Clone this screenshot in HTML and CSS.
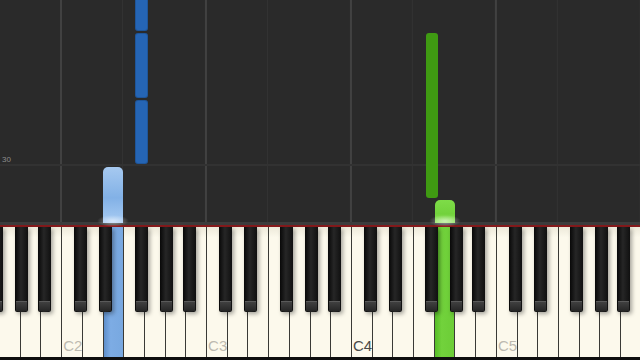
FILE: index.html
```html
<!DOCTYPE html>
<html>
<head>
    <title>Piano Roll</title>
    <link rel="stylesheet" href="styles.css">
</head>
<body>
<div class="stage">
    <div class="roll">
        <span class="measure">30</span>

        <!-- F#2, left hand -->
        <div class="note dark-blue" style="left:135px; top:-4px; height:35px;"></div>
        <div class="note dark-blue" style="left:135px; top:33px; height:65px;"></div>
        <div class="note dark-blue" style="left:135px; top:100px; height:64px;"></div>
        <!-- E2, sounding -->
        <div class="note lit-blue" style="left:103px; top:167px; height:56px;"></div>

        <!-- F#4, right hand -->
        <div class="note dark-green" style="left:426px; top:33px; height:165px;"></div>
        <!-- G4, sounding -->
        <div class="note lit-green" style="left:435px; top:200px; height:23px;"></div>
    </div>

    <div class="rail"></div>
    <div class="redline"></div>

    <div class="keys">
        <div class="white"><div class="black fs"></div></div>
        <div class="white"><div class="black gs"></div></div>
        <div class="white"><div class="black as"></div></div>
        <div class="white"></div>

        <div class="white"><span class="label">C2</span><div class="black cs"></div></div>
        <div class="white"><div class="black ds"></div></div>
        <div class="white pressed-blue"></div>
        <div class="white"><div class="black fs"></div></div>
        <div class="white"><div class="black gs"></div></div>
        <div class="white"><div class="black as"></div></div>
        <div class="white"></div>

        <div class="white"><span class="label">C3</span><div class="black cs"></div></div>
        <div class="white"><div class="black ds"></div></div>
        <div class="white"></div>
        <div class="white"><div class="black fs"></div></div>
        <div class="white"><div class="black gs"></div></div>
        <div class="white"><div class="black as"></div></div>
        <div class="white"></div>

        <div class="white"><span class="label middle">C4</span><div class="black cs"></div></div>
        <div class="white"><div class="black ds"></div></div>
        <div class="white"></div>
        <div class="white"><div class="black fs"></div></div>
        <div class="white pressed-green"><div class="black gs"></div></div>
        <div class="white"><div class="black as"></div></div>
        <div class="white"></div>

        <div class="white"><span class="label">C5</span><div class="black cs"></div></div>
        <div class="white"><div class="black ds"></div></div>
        <div class="white"></div>
        <div class="white"><div class="black fs"></div></div>
        <div class="white"><div class="black gs"></div></div>
        <div class="white"><div class="black as"></div></div>
        <div class="white"></div>
    </div>

    <div class="floor"></div>
</div>
</body>
</html>
```

FILE: styles.css
```css
:root {
    --roll-bg: #2a2a2a;
    --octave-line: #414141;
    --fifth-line: #323232;
    --ivory: #fcf9ec;
    --ebony: #141414;
    --blue-dark: #2565b5;
    --blue-lit: #82b1e6;
    --green-dark: #3f9a12;
    --green-lit: #72d23c;
    --label-color: #bdbab0;
}

body {
    margin: 0;
    background-color: #111;
    font-family: "Liberation Sans", Arial, sans-serif;
    overflow: hidden;
}

.stage {
    width: 640px;
    height: 360px;
    display: flex;
    flex-direction: column;
    overflow: hidden;
}

/* falling notes area */
.roll {
    position: relative;
    flex: none;
    height: 222px;
    background-color: var(--roll-bg);
    background-image:
        linear-gradient(to bottom, transparent 164px, #323232 164px, #323232 166px, transparent 166px),
        linear-gradient(to right, var(--octave-line) 0, var(--octave-line) 2px, transparent 2px, transparent 62px, var(--fifth-line) 62px, var(--fifth-line) 63px, transparent 63px);
    background-size: 100% 100%, 144.97px 100%;
    background-position: 0 0, 60px 0;
}

.measure {
    position: absolute;
    left: 2px;
    top: 155px;
    font-size: 8px;
    color: #8c8c8c;
}

.note {
    position: absolute;
    box-sizing: border-box;
}

.note.dark-blue {
    width: 13px;
    background-color: var(--blue-dark);
    border-radius: 3px;
    box-shadow: inset 0 0 0 1px rgba(0, 0, 0, 0.15);
}

.note.dark-green {
    width: 12px;
    background-color: var(--green-dark);
    border-radius: 3px;
}

.note.lit-blue {
    width: 20px;
    border-radius: 5px 5px 0 0;
    background: linear-gradient(to bottom, #a6c9f0, var(--blue-lit) 55%, #a9ccf3);
}

.note.lit-green {
    width: 20px;
    border-radius: 5px 5px 0 0;
    background: linear-gradient(to bottom, #7edc48, var(--green-lit) 60%, #93e462);
}

.note.lit-blue::after,
.note.lit-green::after {
    content: "";
    position: absolute;
    left: -6px;
    right: -6px;
    bottom: -4px;
    height: 12px;
    background: radial-gradient(ellipse at center, rgba(255, 255, 255, 0.55), rgba(255, 255, 255, 0) 70%);
}

.rail {
    flex: none;
    height: 3px;
    background-color: #3c3c3c;
}

.redline {
    flex: none;
    height: 2px;
    background-color: #861a1c;
}

/* keyboard, starts at F1 (partly off screen) */
.keys {
    flex: none;
    display: flex;
    height: 130px;
    width: 662.7px;
    margin-left: -21.7px;
}

.white {
    flex: 1;
    position: relative;
    box-sizing: border-box;
    border-left: 1px solid #3a3a36;
    background: linear-gradient(to bottom, #ede9da, var(--ivory) 8%, var(--ivory));
}

.white.pressed-blue {
    background: linear-gradient(to right, #5e8fcb, #7dace4 35%, #78a8e0);
}

.white.pressed-green {
    background: linear-gradient(to right, #56bd27, var(--green-lit) 35%, #6ccd37);
}

.black {
    position: absolute;
    top: 0;
    z-index: 1;
    width: 13px;
    height: 85px;
    border-radius: 0 0 2px 2px;
    background: linear-gradient(to right, #080808, #262626 45%, #101010);
    box-shadow: 2px 2px 4px rgba(0, 0, 0, 0.35);
}

.black::after {
    content: "";
    position: absolute;
    left: 1px;
    right: 1px;
    bottom: 1px;
    height: 9px;
    border-top: 1px solid #5a5a5a;
    background: linear-gradient(to bottom, #404040, #262626);
}

.black.cs { left: 12px; }
.black.ds { left: 16px; }
.black.fs { left: 11px; }
.black.gs { left: 15px; }
.black.as { left: 17px; }

.label {
    position: absolute;
    left: 1px;
    bottom: 3px;
    font-size: 15px;
    color: var(--label-color);
}

.label.middle {
    color: #4a4a48;
}

.floor {
    flex: 1;
    background-color: #0e0e0e;
}
```
